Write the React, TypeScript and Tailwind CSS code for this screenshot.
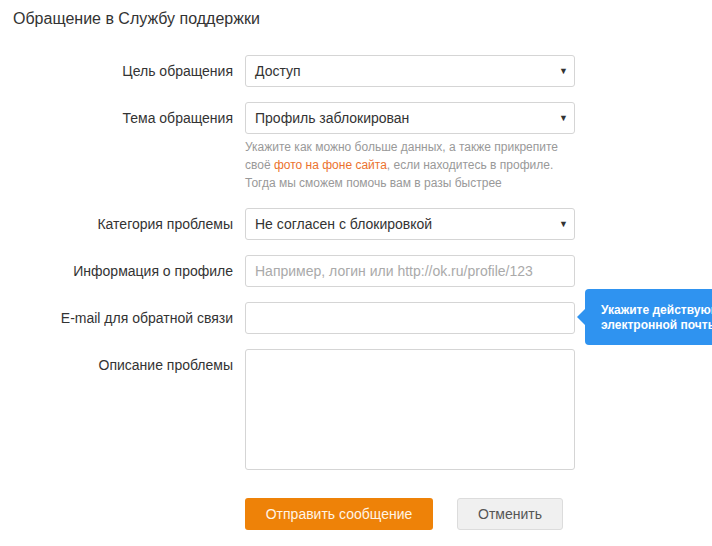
import React from "react";

function Label({ children, top = false }: { children: React.ReactNode; top?: boolean }) {
  return (
    <div className={`text-right text-[14px] text-[#333] leading-[32px] ${top ? "self-start" : ""}`}>
      {children}
    </div>
  );
}

function Select({ value }: { value: string }) {
  return (
    <div className="flex items-center justify-between h-[32px] w-[330px] border border-[#d5d5d5] rounded-[3px] bg-white pl-[9px] pr-[6px]">
      <span className="text-[14px] text-[#333]">{value}</span>
      <span className="text-[9px] text-[#333] leading-none">▼</span>
    </div>
  );
}

export default function App() {
  return (
    <div
      className="relative w-[712px] h-[546px] overflow-hidden bg-white"
      style={{ fontFamily: '"Liberation Sans", Arial, sans-serif' }}
    >
      <h1 className="pl-[13px] pt-[8px] text-[16px] leading-[22px] text-[#333] font-normal">
        Обращение в Службу поддержки
      </h1>

      <div className="mt-[25px] grid grid-cols-[233px_330px] gap-x-[12px] gap-y-[15px] items-center">
        <Label>Цель обращения</Label>
        <Select value="Доступ" />

        <Label top>Тема обращения</Label>
        <div>
          <Select value="Профиль заблокирован" />
          <p className="mt-[4px] text-[12px] leading-[18px] text-[#999]">
            Укажите как можно больше данных, а также прикрепите
            <br />
            своё <span className="text-[#eb722e]">фото на фоне сайта</span>, если находитесь в профиле.
            <br />
            Тогда мы сможем помочь вам в разы быстрее
          </p>
        </div>

        <Label>Категория проблемы</Label>
        <div className="mt-[1px]">
          <Select value="Не согласен с блокировкой" />
        </div>

        <Label>Информация о профиле</Label>
        <input
          className="h-[32px] w-[330px] border border-[#d5d5d5] rounded-[3px] px-[9px] text-[14px] text-[#333] placeholder:text-[#aaa] outline-none"
          placeholder="Например, логин или http://ok.ru/profile/123"
        />

        <Label>E-mail для обратной связи</Label>
        <div className="relative">
          <input className="h-[32px] w-[330px] border border-[#d5d5d5] rounded-[3px] px-[9px] text-[14px] outline-none" />
          <div className="absolute left-[340px] top-[-13px] w-[220px] h-[56px] rounded-[4px] bg-[#2f93f0] pl-[16px] pt-[14px] text-[12px] font-bold leading-[15px] text-white">
            <span className="absolute left-[-8px] top-[20px] w-0 h-0 border-y-[8px] border-y-transparent border-r-[8px] border-r-[#2f93f0]" />
            Укажите действующий адрес
            <br />
            электронной почты
          </div>
        </div>

        <Label top>Описание проблемы</Label>
        <textarea className="h-[121px] w-[330px] border border-[#d5d5d5] rounded-[3px] px-[9px] py-[6px] text-[14px] resize-none outline-none" />

        <div />
        <div className="mt-[13px] flex gap-[24px]">
          <button className="h-[32px] w-[188px] rounded-[3px] bg-[#ee8208] text-[14px] text-[#fff4e6]">
            Отправить сообщение
          </button>
          <button className="h-[32px] w-[106px] rounded-[3px] border border-[#dcdcdc] bg-[#f0f0f0] text-[14px] text-[#555]">
            Отменить
          </button>
        </div>
      </div>
    </div>
  );
}
